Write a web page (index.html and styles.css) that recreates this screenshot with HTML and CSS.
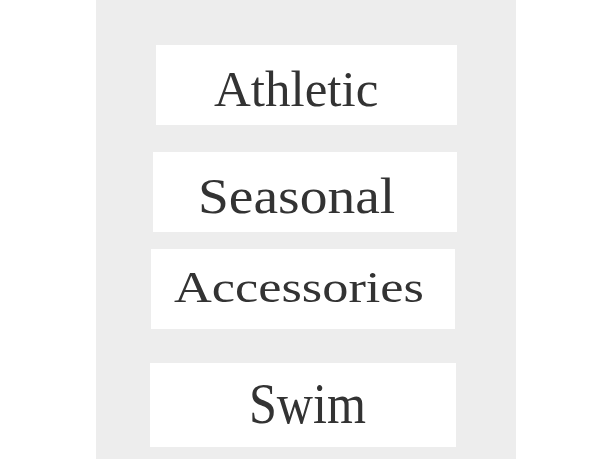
FILE: index.html
```html
<!DOCTYPE html>
<html lang="en">
<head>
<meta charset="utf-8">
<title>Shop by category</title>
<link rel="stylesheet" href="styles.css">
</head>
<body>
  <nav class="categories">
    <a class="tile tile--athletic" href="#"><span class="tile__label">Athletic</span></a>
    <a class="tile tile--seasonal" href="#"><span class="tile__label">Seasonal</span></a>
    <a class="tile tile--accessories" href="#"><span class="tile__label">Accessories</span></a>
    <a class="tile tile--swim" href="#"><span class="tile__label">Swim</span></a>
  </nav>
</body>
</html>
```
FILE: styles.css
```css
html, body {
  margin: 0;
  padding: 0;
  background: #ffffff;
}

.categories {
  box-sizing: border-box;
  width: 420px;
  height: 459px;
  margin-left: 96px;
  padding-top: 45px;
  background: #ededed;
  display: flex;
  flex-direction: column;
  align-items: flex-start;
}

.tile {
  box-sizing: border-box;
  display: block;
  height: 80px;
  background: #ffffff;
  color: #333333;
  text-decoration: none;
  font-family: "Liberation Serif", "DejaVu Serif", serif;
  line-height: 1;
  white-space: nowrap;
}

.tile__label {
  display: inline-block;
  transform-origin: 0 0;
}

.tile--athletic {
  width: 301px;
  margin-left: 60px;
  padding: 19px 0 0 58px;
  font-size: 51px;
}

.tile--seasonal {
  width: 304px;
  margin: 27px 0 0 57px;
  padding: 19px 0 0 45px;
  font-size: 51px;
}
.tile--seasonal .tile__label { transform: scaleX(1.088); }

.tile--accessories {
  width: 304px;
  margin: 17px 0 0 55px;
  padding: 16px 0 0 23px;
  font-size: 45px;
}
.tile--accessories .tile__label { transform: scaleX(1.163); }

.tile--swim {
  width: 306px;
  height: 84px;
  margin: 34px 0 0 54px;
  padding: 12px 0 0 99px;
  font-size: 58px;
}
.tile--swim .tile__label { transform: scaleX(0.864); }
```
